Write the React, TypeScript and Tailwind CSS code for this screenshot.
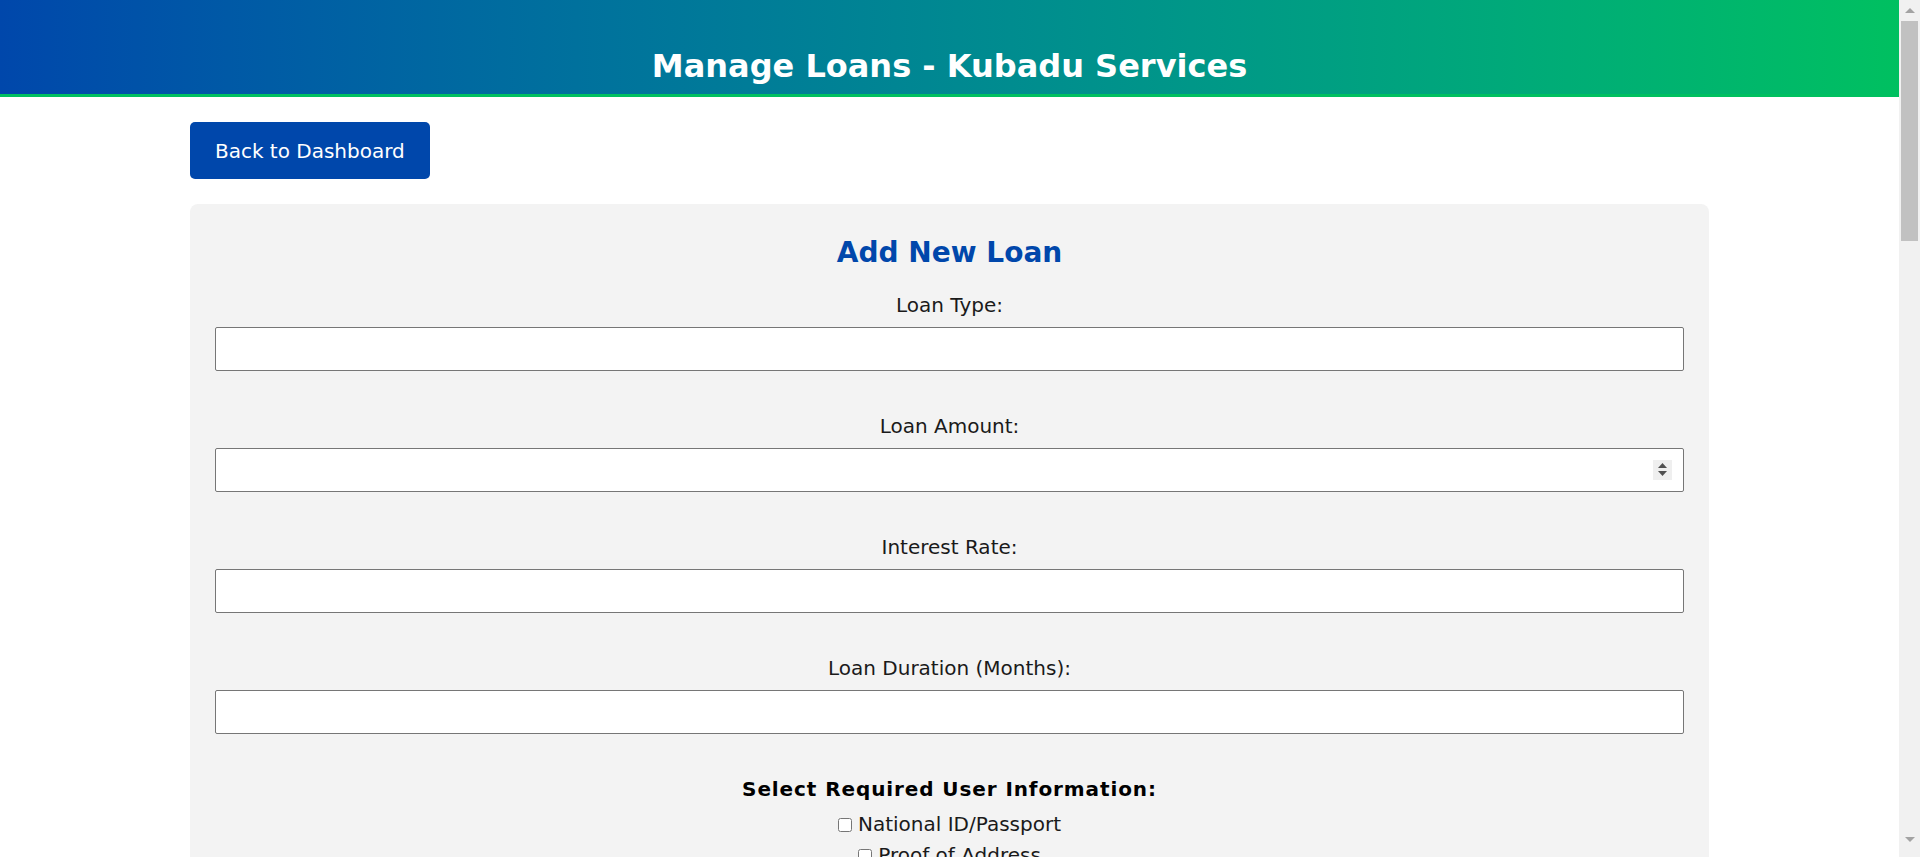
import React from "react";

const fields = [
  { label: "Loan Type:", spinner: false },
  { label: "Loan Amount:", spinner: true },
  { label: "Interest Rate:", spinner: false },
  { label: "Loan Duration (Months):", spinner: false },
];

const requirements = [
  "National ID/Passport",
  "Proof of Address",
  "Bank Statement",
  "Payslip",
  "Employment Letter",
  "Next of Kin Details",
];

const loans = [
  ["Personal Loan", "5000", "12%", "12"],
  ["Business Loan", "20000", "10%", "24"],
  ["Emergency Loan", "1500", "15%", "6"],
  ["School Fees Loan", "3000", "9%", "10"],
  ["Asset Finance", "15000", "11%", "36"],
  ["Salary Advance", "1000", "8%", "3"],
];

function Spinner() {
  return (
    <div className="pointer-events-none absolute right-[12px] top-[12px] flex h-[20px] w-[19px] items-center justify-center bg-[#efefef]">
      <svg width="9" height="14" viewBox="0 0 9 14">
        <path d="M4.5 0 L9 5 L0 5 Z" fill="#505050" />
        <path d="M0 8 L9 8 L4.5 13 Z" fill="#505050" />
      </svg>
    </div>
  );
}

function ScrollBar() {
  return (
    <aside className="sticky top-0 flex h-screen w-[21px] shrink-0 flex-col bg-[#f1f1f1]">
      <div className="flex h-[21px] items-center justify-center pl-[1px]">
        <svg width="10" height="6" viewBox="0 0 10 6">
          <path d="M5 0 L10 5 L0 5 Z" fill="#a3a3a3" />
        </svg>
      </div>
      <div className="ml-[2px] h-[220px] w-[17px] bg-[#c1c1c1]" />
      <div className="flex-1" />
      <div className="flex h-[21px] items-start justify-center pl-[1px] pt-[1px]">
        <svg width="10" height="6" viewBox="0 0 10 6">
          <path d="M0 0 L10 0 L5 5 Z" fill="#a3a3a3" />
        </svg>
      </div>
    </aside>
  );
}

export default function App() {
  return (
    <div className="flex items-start bg-white text-[#222]" style={{ fontFamily: '"DejaVu Sans", sans-serif' }}>
      <div className="min-w-0 flex-1">
        <header className="flex h-[97px] items-end justify-center border-b-[3px] border-[#00c060] bg-gradient-to-r from-[#0047ab] to-[#00c060] pb-[8px]">
          <h1 className="text-[32px] font-bold leading-[40px] text-white">Manage Loans - Kubadu Services</h1>
        </header>

        <main className="mx-auto w-[80%] pb-[60px] pt-[25px]">
          <button className="h-[57px] rounded-[5px] bg-[#0047ab] px-[25px] text-[20px] leading-[24px] text-white">
            Back to Dashboard
          </button>

          <section className="mt-[25px] rounded-[8px] bg-[#f3f3f3] px-[25px] pb-[30px] pt-[31px]">
            <h2 className="mb-[22px] text-center text-[28px] font-bold leading-[36px] text-[#0047ab]">Add New Loan</h2>

            {fields.map((f) => (
              <div key={f.label} className="mb-[43px]">
                <label className="mb-[10px] block text-center text-[20px] leading-[24px] text-[#1a1a1a]">{f.label}</label>
                <div className="relative">
                  <input
                    type="text"
                    className="block h-[44px] w-full rounded-[2px] border border-[#767676] bg-white px-[10px] text-[18px] outline-none"
                  />
                  {f.spinner && <Spinner />}
                </div>
              </div>
            ))}

            <h3 className="mb-[8px] text-center text-[20px] font-bold leading-[24px] tracking-[0.9px] text-black">
              Select Required User Information:
            </h3>
            <div className="flex flex-col items-center">
              {requirements.map((r) => (
                <label key={r} className="flex h-[31px] items-center text-[20px] leading-[31px] text-[#1a1a1a]">
                  <input type="checkbox" className="mr-[6px] h-[14px] w-[14px]" />
                  {r}
                </label>
              ))}
            </div>

            <div className="mt-[30px] flex justify-center">
              <button className="h-[57px] rounded-[5px] bg-[#00c060] px-[40px] text-[20px] text-white">Add Loan</button>
            </div>
          </section>

          <section className="mt-[40px] rounded-[8px] bg-[#f3f3f3] px-[25px] pb-[30px] pt-[31px]">
            <h2 className="mb-[22px] text-center text-[28px] font-bold leading-[36px] text-[#0047ab]">Existing Loans</h2>
            <table className="w-full border-collapse bg-white text-[18px]">
              <thead>
                <tr className="bg-[#0047ab] text-white">
                  <th className="border border-[#ccc] p-[14px]">Loan Type</th>
                  <th className="border border-[#ccc] p-[14px]">Amount</th>
                  <th className="border border-[#ccc] p-[14px]">Interest Rate</th>
                  <th className="border border-[#ccc] p-[14px]">Duration (Months)</th>
                  <th className="border border-[#ccc] p-[14px]">Actions</th>
                </tr>
              </thead>
              <tbody>
                {loans.map((l) => (
                  <tr key={l[0]}>
                    {l.map((c, i) => (
                      <td key={i} className="h-[120px] border border-[#ccc] p-[14px] text-center">
                        {c}
                      </td>
                    ))}
                    <td className="border border-[#ccc] p-[14px] text-center">
                      <button className="mr-[8px] rounded-[4px] bg-[#0047ab] px-[14px] py-[8px] text-white">Edit</button>
                      <button className="rounded-[4px] bg-[#d9534f] px-[14px] py-[8px] text-white">Delete</button>
                    </td>
                  </tr>
                ))}
              </tbody>
            </table>
          </section>
        </main>
        <footer className="mt-[40px] bg-[#0047ab] py-[30px] text-center text-[16px] text-white">
          © 2024 Kubadu Services. All rights reserved.
        </footer>
      </div>
      <ScrollBar />
    </div>
  );
}
